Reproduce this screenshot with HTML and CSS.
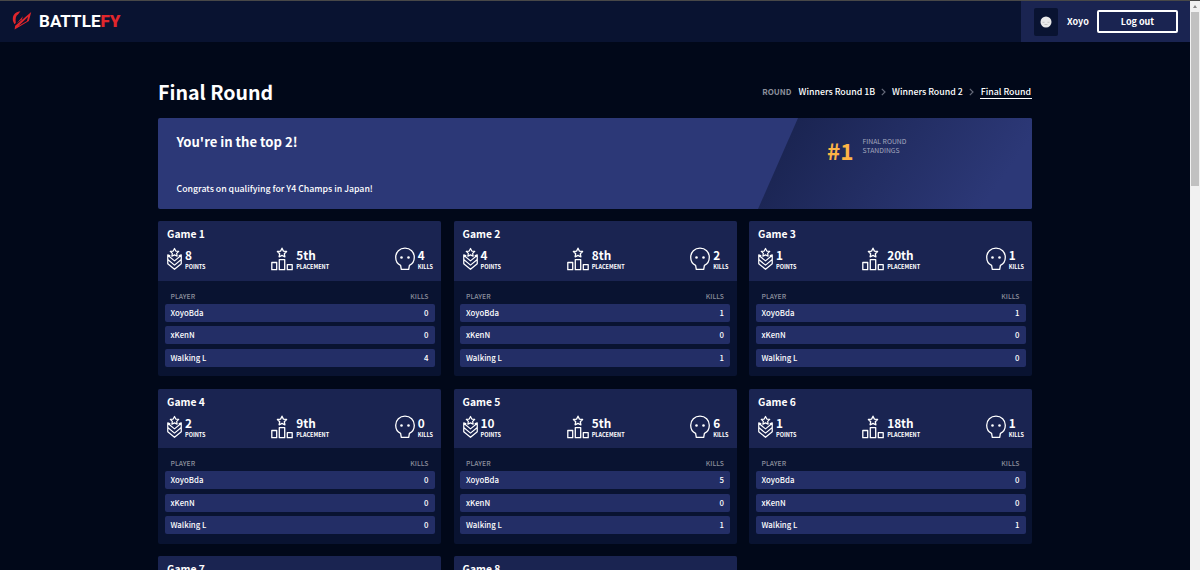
FILE: index.html
```html
<!DOCTYPE html>
<html lang="en">
<head>
    <meta charset="UTF-8">
    <meta name="viewport" content="width=device-width, initial-scale=1.0">
    <title>Battlefy - Final Round</title>
    <link rel="stylesheet" href="styles.css">
</head>
<body>
    <svg class="sprite" width="0" height="0">
        <symbol id="points" viewBox="0 0 16 24">
            <path d="M8 .8l1.4 2.7 3.1.4-2.200 2.100.5 3L8 7.600 5.200 9l.5-3-2.200-2.100 3.100-.4z"/>
            <path d="M3.500 8.600L.8 7.600V17l7.200 6 7.200-6V7.600l-2.700 1M.8 8l7.200 6 7.200-6M.8 12.500l7.200 6 7.200-6"/>
        </symbol>
        <symbol id="placement" viewBox="0 0 22 24">
            <path d="M11 1.200l1.400 2.900 3.200.4-2.300 2.200.6 3.100-2.900-1.500-2.900 1.500.6-3.100-2.300-2.200 3.200-.4z"/>
            <path d="M.8 15.500h4.900v7.200H.8zM8.300 12.600h5.400v10.100H8.300zM16.300 17.700h4.900v5h-4.900z"/>
        </symbol>
        <symbol id="kills" viewBox="0 0 20 24">
            <path d="M6.300 22.300L5.600 18.400C2.500 17 .7 14 .7 10.300.7 5.200 4.700 1.200 10 1.200s9.300 4 9.300 9.100c0 3.700-1.800 6.700-4.900 8.100l-.7 3.900z"/>
            <circle class="eye" cx="6.500" cy="10.500" r="1.300"/>
            <circle class="eye" cx="13.500" cy="10.500" r="1.300"/>
        </symbol>
    </svg>

    <div class="page">
        <header class="topbar">
            <a class="logo" href="#">
                <svg class="logo-mark" viewBox="0 0 20 20">
                    <path d="M.5 10.500C-.2 5.500 1.400 1.200 8.300.3L6 3.400C3.500 4.500 2.900 7.500 3.500 12.500L2 14z"/>
                    <path d="M2.200 19.500l.6-4L19.700 1 17.200 10.500zM6.300 15.700l8.900-5.200 1.200-4.500z" fill-rule="evenodd"/>
                    <path d="M4.500 13L11 5.500 9.800 9z"/>
                </svg>
                <span class="logo-text">BATTLE<b>FY</b></span>
            </a>
            <div class="account">
                <div class="avatar">
                    <svg viewBox="0 0 12 12">
                        <circle cx="6" cy="6" r="5.500" fill="#e9e9e9"/>
                        <path d="M2.500 6.300h2M7.500 6.300h2M4.500 8.500h3" stroke="#b5b5b5" stroke-width=".7"/>
                    </svg>
                </div>
                <span class="username">Xoyo</span>
                <button class="logout">Log out</button>
            </div>
        </header>

        <main class="content">
            <div class="title-row">
                <h1>Final Round</h1>
                <nav class="rounds">
                    <span class="rounds-label">ROUND</span>
                    <a href="#">Winners Round 1B</a>
                    <svg class="chevron" viewBox="0 0 5 8"><path d="M.8.8L4 4 .8 7.200"/></svg>
                    <a href="#">Winners Round 2</a>
                    <svg class="chevron" viewBox="0 0 5 8"><path d="M.8.8L4 4 .8 7.200"/></svg>
                    <a class="current" href="#">Final Round</a>
                </nav>
            </div>

            <section class="banner">
                <div class="banner-message">
                    <h2>You're in the top 2!</h2>
                    <p>Congrats on qualifying for Y4 Champs in Japan!</p>
                </div>
                <div class="banner-rank">
                    <span class="rank">#1</span>
                    <span class="rank-label">FINAL ROUND<br>STANDINGS</span>
                </div>
            </section>

            <section class="games"></section>
        </main>
    </div>

    <div class="scrollbar">
        <div class="scroll-arrow"></div>
        <div class="scroll-thumb"></div>
    </div>

    <script src="games.js"></script>
</body>
</html>
```
FILE: styles.css
```css
* {
    margin: 0;
    padding: 0;
    box-sizing: border-box;
}

body {
    display: flex;
    height: 570px;
    overflow: hidden;
    border-top: 1px solid #484848;
    background: #010819;
    color: #fff;
    font-family: "Noto Sans CJK SC", "Noto Sans", sans-serif;
}

a {
    color: inherit;
    text-decoration: none;
}

.sprite {
    position: absolute;
}

.page {
    width: 1190px;
    height: 569px;
    overflow: hidden;
}

/* top bar */
.topbar {
    display: flex;
    justify-content: space-between;
    height: 41px;
    background: #091331;
}

.logo {
    display: flex;
    align-items: center;
    gap: 7px;
    padding-left: 12px;
    padding-bottom: 2px;
}

.logo-mark {
    width: 20px;
    height: 19px;
    fill: #e0262c;
}

.logo-text {
    font-family: Roboto, sans-serif;
    font-size: 17px;
    font-weight: 700;
    letter-spacing: 0.05px;
}

.logo-text b {
    color: #e0262c;
}

.account {
    display: flex;
    align-items: center;
    width: 169px;
    padding-left: 13px;
    background: #1a2451;
}

.avatar {
    display: flex;
    align-items: center;
    justify-content: center;
    width: 24px;
    height: 28px;
    border-radius: 2px;
    background: #091331;
}

.avatar svg {
    width: 12px;
    height: 12px;
}

.username {
    width: 39px;
    padding-left: 9px;
    font-size: 9px;
    font-weight: 700;
}

.logout {
    width: 81px;
    height: 23px;
    border: 2px solid #fff;
    border-radius: 2px;
    background: none;
    color: #fff;
    font-family: inherit;
    font-size: 9px;
    font-weight: 700;
}

/* page title and round links */
.content {
    width: 874px;
    margin-left: 158px;
    padding-top: 33px;
}

.title-row {
    display: flex;
    justify-content: space-between;
    align-items: center;
    height: 34px;
    margin-bottom: 9px;
}

h1 {
    font-size: 19.6px;
    font-weight: 700;
    line-height: 32px;
}

.rounds {
    display: flex;
    align-items: center;
    font-size: 8.8px;
    font-weight: 500;
    line-height: 12px;
}

.rounds-label {
    margin-right: 7px;
    color: #8b8f9c;
    font-size: 8px;
    font-weight: 700;
}

.chevron {
    width: 5px;
    height: 8px;
    margin: 0 6px;
    fill: none;
    stroke: #666b7b;
    stroke-width: 1.2;
}

.current {
    padding: 0 1px;
    border-bottom: 1px solid #fff;
}

/* result banner */
.banner {
    display: flex;
    height: 91px;
    margin-bottom: 12.4px;
    border-radius: 2px;
    background: #2c3877;
    overflow: hidden;
}

.banner-message {
    width: 600px;
    padding: 14px 0 0 18.5px;
}

h2 {
    height: 49px;
    font-size: 13.1px;
    font-weight: 700;
    line-height: 20px;
}

.banner-message p {
    font-size: 8.75px;
    font-weight: 500;
    line-height: 15px;
}

.banner-rank {
    display: flex;
    flex: 1;
    gap: 9px;
    padding: 19px 0 0 69px;
    background: linear-gradient(125deg, #1a2451 10%, #2c3877 85%);
    clip-path: polygon(40px 0, 100% 0, 100% 100%, 0 100%);
}

.rank {
    color: #fdb446;
    font-size: 22.5px;
    font-weight: 700;
    line-height: 27px;
}

.rank-label {
    color: #a5a9bf;
    font-size: 6.8px;
    line-height: 9px;
}

/* game cards */
.games {
    display: grid;
    grid-template-columns: repeat(3, 283px);
    gap: 12.5px;
}

.game {
    height: 155px;
    border-radius: 2px;
    background: #091331;
    overflow: hidden;
}

.game-head {
    height: 59.5px;
    padding: 5px 8px 0 9px;
    background: #1a2451;
}

h3 {
    font-size: 10.3px;
    font-weight: 700;
    line-height: 15px;
}

.stats {
    display: flex;
    justify-content: space-between;
    margin-top: 6px;
}

.stat {
    display: flex;
    gap: 3px;
}

.icon {
    height: 24px;
    fill: none;
    stroke: #fff;
    stroke-width: 1.3;
    stroke-linejoin: round;
}

.eye {
    fill: #fff;
    stroke: none;
}

.icon-points {
    width: 15px;
}

.icon-placement {
    width: 22px;
}

.icon-kills {
    width: 20px;
}

.stat-value {
    font-size: 11.8px;
    font-weight: 700;
    line-height: 16px;
}

.stat-label {
    font-size: 5.5px;
    font-weight: 700;
    line-height: 8px;
}

.players {
    padding: 9px 6.5px 0;
}

.players-head,
.player {
    display: flex;
    justify-content: space-between;
    padding: 0 6px;
}

.players-head {
    height: 14px;
    color: #8b8f9c;
    font-size: 6.8px;
    font-weight: 500;
    line-height: 12px;
}

.player {
    height: 18px;
    margin-bottom: 4.5px;
    border-radius: 2px;
    background: #232e66;
    font-size: 7.8px;
    font-weight: 500;
    line-height: 18px;
}

/* scrollbar */
.scrollbar {
    width: 10px;
    padding: 4px 1px 0;
    background: #f1f1f1;
}

.scroll-arrow {
    width: 4px;
    margin: 0 auto 4px;
    border: 2px solid transparent;
    border-top: 0;
    border-bottom: 3px solid #888;
}

.scroll-thumb {
    height: 174px;
    background: #c1c1c1;
}
```
FILE: games.js
```js
const names = ['XoyoBda', 'xKenN', 'Walking L'];

const games = [
    { points: 8, placement: '5th', kills: [0, 0, 4] },
    { points: 4, placement: '8th', kills: [1, 0, 1] },
    { points: 1, placement: '20th', kills: [1, 0, 0] },
    { points: 2, placement: '9th', kills: [0, 0, 0] },
    { points: 10, placement: '5th', kills: [5, 0, 1] },
    { points: 1, placement: '18th', kills: [0, 0, 1] },
    {},
    {}
];

function stat(icon, value) {
    return `
        <div class="stat">
            <svg class="icon icon-${icon}"><use href="#${icon}"/></svg>
            <div>
                <div class="stat-value">${value}</div>
                <div class="stat-label">${icon.toUpperCase()}</div>
            </div>
        </div>`;
}

// games without results only get a title
function details(game) {
    const total = game.kills.reduce((a, b) => a + b, 0);
    const rows = names.map((name, n) =>
        `<div class="player"><span>${name}</span><span>${game.kills[n]}</span></div>`).join('');

    return {
        stats: stat('points', game.points) + stat('placement', game.placement) + stat('kills', total),
        players: `<div class="players-head"><span>PLAYER</span><span>KILLS</span></div>${rows}`
    };
}

function card(game, i) {
    const { stats, players } = game.kills ? details(game) : { stats: '', players: '' };

    return `
        <article class="game">
            <div class="game-head">
                <h3>Game ${i + 1}</h3>
                <div class="stats">${stats}</div>
            </div>
            <div class="players">${players}</div>
        </article>`;
}

document.querySelector('.games').innerHTML = games.map(card).join('');
```
